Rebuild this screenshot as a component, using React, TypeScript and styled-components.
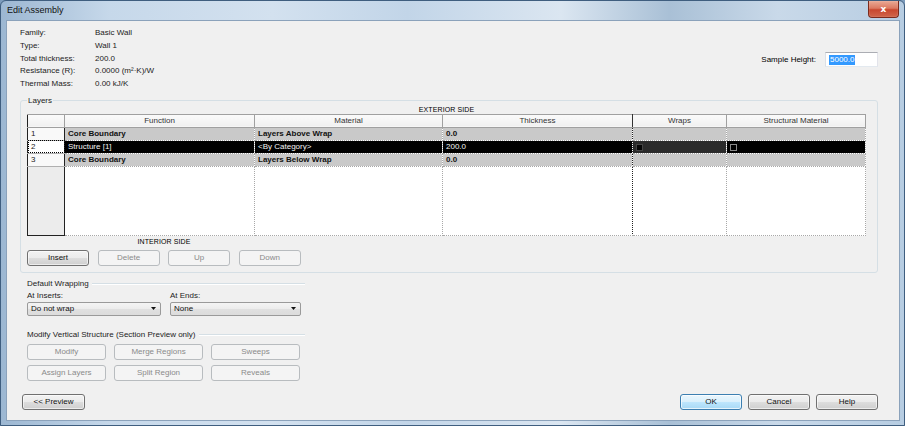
import React from "react";
import styled, { createGlobalStyle, css } from "styled-components";

const GlobalStyle = createGlobalStyle`
  html, body { margin: 0; padding: 0; }
  body {
    width: 905px; height: 426px; overflow: hidden;
    font-family: "Liberation Sans", Arial, sans-serif;
    font-size: 8px; color: #000; background: #7d9cbc;
  }
  #root { width: 905px; height: 426px; }
  * { box-sizing: border-box; }
`;

const Window = styled.div`
  width: 905px;
  height: 426px;
  display: flex;
  flex-direction: column;
  border: 1px solid #3f5e7f;
  border-radius: 6px 6px 0 0;
  background: linear-gradient(90deg, #9cb7d2 0%, #c6d8ea 12%, #d3e1ef 30%, #c2d5e8 45%, #dbe6f1 62%, #a9c0d6 74%, #c9d9e9 86%, #b7cde2 100%);
`;

const TitleBar = styled.div`
  height: 19px;
  display: flex;
  align-items: flex-start;
  justify-content: space-between;
  padding-left: 6px;
  padding-right: 5px;
`;

const TitleText = styled.span`
  font-size: 9px;
  line-height: 19px;
  color: #111;
`;

const CloseButton = styled.div`
  width: 31px;
  height: 17px;
  border: 1px solid #7b2a1c;
  border-top: none;
  border-radius: 0 0 4px 4px;
  background: linear-gradient(180deg, #e9a995 0%, #dc7a62 45%, #c8472e 55%, #d0654a 100%);
  color: #fff;
  font-family: "DejaVu Sans", sans-serif;
  font-weight: bold;
  font-size: 9px;
  display: flex;
  align-items: center;
  justify-content: center;
  box-shadow: inset 0 0 1px rgba(255, 255, 255, 0.7);
`;

const Middle = styled.div`
  flex: 1;
  display: flex;
  padding: 0 5px;
`;

const Content = styled.div`
  flex: 1;
  display: flex;
  flex-direction: column;
  background: #f0f0f0;
  border: 1px solid #8ba2bb;
  padding: 6px 21px 0 13px;
`;

const BottomFrame = styled.div`
  height: 4px;
`;

const TopSection = styled.div`
  display: flex;
  justify-content: space-between;
  align-items: flex-start;
`;

const InfoGrid = styled.div`
  display: grid;
  grid-template-columns: 75px auto;
  line-height: 12.8px;
  color: #222;
`;

const SampleRow = styled.div`
  display: flex;
  align-items: center;
  gap: 9px;
  margin-top: 25px;
`;

const TextInput = styled.div`
  width: 53px;
  height: 15px;
  background: #fff;
  border: 1px solid #abadb3;
  border-color: #abadb3 #e2e3ea #e3e9ef #dbdfe6;
  display: flex;
  align-items: center;
  padding-left: 3px;
`;

const Selected = styled.span`
  background: #3399ff;
  color: #fff;
  line-height: 10px;
  padding: 0 1px;
`;

const Group = styled.fieldset`
  margin: 5px 0 0 0;
  padding: 0 11px 6px 6px;
  border: 1px solid #d5dfe5;
  border-radius: 3px;
  min-inline-size: auto;
`;

const Legend = styled.legend`
  padding: 0 1px;
  line-height: 10px;
  color: #222;
`;

const SideLabel = styled.div`
  text-align: center;
  line-height: 8px;
  font-size: 7px;
  letter-spacing: 0.1px;
`;

const GridTable = styled.table`
  width: 838px;
  table-layout: fixed;
  border-collapse: collapse;
  background: #fff;
`;

const HeadCell = styled.th<{ $dark?: boolean; $first?: boolean }>`
  height: 13px;
  padding: 0;
  font-weight: normal;
  text-align: center;
  background: linear-gradient(180deg, #fbfbfb, #f0f0f0);
  border-top: 1px solid #a0a0a0;
  border-bottom: 1px solid #a0a0a0;
  border-right: 1px solid ${(p) => (p.$dark ? "#333" : "#a0a0a0")};
  ${(p) => p.$first && "border-left: 1px solid #222;"}
  color: #333;
`;

const RowHead = styled.th<{ $empty?: boolean; $focus?: boolean }>`
  padding: 0 0 0 3px;
  height: 13px;
  font-weight: normal;
  text-align: left;
  color: #222;
  background: ${(p) => (p.$empty ? "#ececec" : "#f9f9f9")};
  border-left: 1px solid #222;
  border-right: 1px solid #222;
  border-bottom: 1px solid ${(p) => (p.$empty ? "#222" : "#b0b0b0")};
  ${(p) =>
    p.$focus &&
    css`
      outline: 1px dotted #000;
      outline-offset: -1px;
      background: #fff;
    `}
`;

type Tone = "core" | "sel" | "sel2" | "plain";

const toneStyles: Record<Tone, ReturnType<typeof css>> = {
  core: css`
    background: #c9c9c9;
    font-weight: bold;
    color: #111;
  `,
  sel: css`
    background: #000;
    color: #f4f4f4;
  `,
  sel2: css`
    background: #2b2b2b;
    color: #fff;
  `,
  plain: css`
    background: #fff;
  `,
};

const Cell = styled.td<{ $tone: Tone; $dark?: boolean; $h?: number }>`
  height: ${(p) => p.$h ?? 13}px;
  padding: 0 0 0 3px;
  white-space: nowrap;
  overflow: hidden;
  vertical-align: middle;
  border-right: 1px dotted ${(p) => (p.$dark ? "#222" : "#a8a8a8")};
  border-bottom: 1px dotted #a8a8a8;
  ${(p) => toneStyles[p.$tone]}
`;

const Check = styled.span<{ $filled?: boolean }>`
  display: inline-block;
  width: 7px;
  height: 7px;
  vertical-align: middle;
  border: 1px solid ${(p) => (p.$filled ? "#444" : "#8a8a8a")};
  background: ${(p) => (p.$filled ? "#050505" : "#000")};
`;

const ButtonBlock = styled.div`
  width: 274px;
  display: flex;
  flex-direction: column;
`;

const InteriorLabel = styled(SideLabel)`
  margin-top: 2px;
`;

const ButtonRow = styled.div<{ $cols: string; $gap?: number }>`
  display: grid;
  grid-template-columns: ${(p) => p.$cols};
  column-gap: ${(p) => p.$gap ?? 8}px;
  margin-top: 4px;
`;

const Button = styled.div<{ $disabled?: boolean; $default?: boolean; $w?: number }>`
  height: 16px;
  ${(p) => (p.$w ? `width: ${p.$w}px;` : "")}
  display: flex;
  align-items: center;
  justify-content: center;
  border-radius: 3px;
  border: 1px solid #707070;
  background: linear-gradient(180deg, #f2f2f2 0%, #ebebeb 50%, #dddddd 51%, #cfcfcf 100%);
  box-shadow: inset 0 0 0 1px rgba(255, 255, 255, 0.6);
  color: #111;
  ${(p) =>
    p.$disabled &&
    css`
      border-color: #b8bcbf;
      background: #f4f4f4;
      color: #8a8a8a;
      box-shadow: none;
    `}
  ${(p) =>
    p.$default &&
    css`
      border-color: #3c7fb1;
      background: linear-gradient(180deg, #eaf6fd 0%, #d9f0fc 50%, #bee6fd 51%, #a7d9f5 100%);
      box-shadow: inset 0 0 0 1px rgba(255, 255, 255, 0.7);
    `}
`;

const Section = styled.div<{ $mt: number }>`
  width: 278px;
  margin-left: 7px;
  margin-top: ${(p) => p.$mt}px;
  display: flex;
  flex-direction: column;
`;

const SectionTitle = styled.div`
  display: flex;
  align-items: center;
  gap: 3px;
  line-height: 10px;
  color: #222;
  &::after {
    content: "";
    flex: 1;
    height: 1px;
    background: #d5dfe5;
    border-bottom: 1px solid #fff;
  }
`;

const FieldGrid = styled.div`
  display: grid;
  grid-template-columns: 134px 131px;
  column-gap: 9px;
  margin-top: 2px;
`;

const FieldLabel = styled.div`
  line-height: 10px;
  color: #222;
`;

const Dropdown = styled.div`
  margin-top: 1px;
  height: 14px;
  display: flex;
  align-items: center;
  justify-content: space-between;
  padding: 0 4px 0 3px;
  border: 1px solid #9a9a9a;
  border-radius: 2px;
  background: linear-gradient(180deg, #f4f4f4 0%, #ececec 50%, #e0e0e0 51%, #dcdcdc 100%);
  color: #111;
`;

const Footer = styled.div`
  margin-top: 13px;
  display: flex;
  justify-content: space-between;
  padding-left: 2px;
`;

const FooterRight = styled.div`
  display: flex;
  gap: 6px;
`;

const Arrow = () => (
  <svg width="5" height="3" viewBox="0 0 5 3">
    <path d="M0 0 H5 L2.5 3 Z" fill="#111" />
  </svg>
);

const rows = [
  { n: "1", fn: "Core Boundary", mat: "Layers Above Wrap", th: "0.0", tone: "core" as Tone },
  { n: "2", fn: "Structure [1]", mat: "<By Category>", th: "200.0", tone: "sel" as Tone },
  { n: "3", fn: "Core Boundary", mat: "Layers Below Wrap", th: "0.0", tone: "core" as Tone },
];

const info = [
  ["Family:", "Basic Wall"],
  ["Type:", "Wall 1"],
  ["Total thickness:", "200.0"],
  ["Resistance (R):", "0.0000 (m²·K)/W"],
  ["Thermal Mass:", "0.00 kJ/K"],
];

const colWidths = [37, 190, 188, 190, 94, 139];

export default function App() {
  return (
    <>
      <GlobalStyle />
      <Window>
        <TitleBar>
          <TitleText>Edit Assembly</TitleText>
          <CloseButton>x</CloseButton>
        </TitleBar>
        <Middle>
          <Content>
            <TopSection>
              <InfoGrid>
                {info.map(([k, v]) => (
                  <React.Fragment key={k}>
                    <span>{k}</span>
                    <span>{v}</span>
                  </React.Fragment>
                ))}
              </InfoGrid>
              <SampleRow>
                <span>Sample Height:</span>
                <TextInput>
                  <Selected>5000.0</Selected>
                </TextInput>
              </SampleRow>
            </TopSection>

            <Group>
              <Legend>Layers</Legend>
              <SideLabel>EXTERIOR SIDE</SideLabel>
              <GridTable>
                <colgroup>
                  {colWidths.map((w, i) => (
                    <col key={i} width={w} />
                  ))}
                </colgroup>
                <thead>
                  <tr>
                    <HeadCell $first />
                    <HeadCell>Function</HeadCell>
                    <HeadCell>Material</HeadCell>
                    <HeadCell $dark>Thickness</HeadCell>
                    <HeadCell>Wraps</HeadCell>
                    <HeadCell>Structural Material</HeadCell>
                  </tr>
                </thead>
                <tbody>
                  {rows.map((r) => {
                    const sel = r.tone === "sel";
                    const h = sel ? 12 : 13;
                    return (
                      <tr key={r.n}>
                        <RowHead $focus={sel}>{r.n}</RowHead>
                        <Cell $tone={r.tone} $h={h}>{r.fn}</Cell>
                        <Cell $tone={r.tone} $h={h}>{r.mat}</Cell>
                        <Cell $tone={r.tone} $h={h} $dark>{r.th}</Cell>
                        <Cell $tone={sel ? "sel2" : r.tone} $h={h}>
                          {sel && <Check $filled />}
                        </Cell>
                        <Cell $tone={r.tone} $h={h}>
                          {sel && <Check />}
                        </Cell>
                      </tr>
                    );
                  })}
                  <tr>
                    <RowHead $empty />
                    <Cell $tone="plain" $h={69} />
                    <Cell $tone="plain" $h={69} />
                    <Cell $tone="plain" $h={69} $dark />
                    <Cell $tone="plain" $h={69} />
                    <Cell $tone="plain" $h={69} />
                  </tr>
                </tbody>
              </GridTable>
              <ButtonBlock>
                <InteriorLabel>INTERIOR SIDE</InteriorLabel>
                <ButtonRow $cols="62px 62px 62px 62px" $gap={8.6}>
                  <Button>Insert</Button>
                  <Button $disabled>Delete</Button>
                  <Button $disabled>Up</Button>
                  <Button $disabled>Down</Button>
                </ButtonRow>
              </ButtonBlock>
            </Group>

            <Section $mt={6}>
              <SectionTitle>Default Wrapping</SectionTitle>
              <FieldGrid>
                <FieldLabel>At Inserts:</FieldLabel>
                <FieldLabel>At Ends:</FieldLabel>
                <Dropdown>
                  <span>Do not wrap</span>
                  <Arrow />
                </Dropdown>
                <Dropdown>
                  <span>None</span>
                  <Arrow />
                </Dropdown>
              </FieldGrid>
            </Section>

            <Section $mt={14}>
              <SectionTitle>Modify Vertical Structure (Section Preview only)</SectionTitle>
              <ButtonRow $cols="79px 89px 89px" $gap={8}>
                <Button $disabled>Modify</Button>
                <Button $disabled>Merge Regions</Button>
                <Button $disabled>Sweeps</Button>
              </ButtonRow>
              <ButtonRow $cols="79px 89px 89px" $gap={8} style={{ marginTop: 5 }}>
                <Button $disabled>Assign Layers</Button>
                <Button $disabled>Split Region</Button>
                <Button $disabled>Reveals</Button>
              </ButtonRow>
            </Section>

            <Footer>
              <Button $w={63}>&lt;&lt; Preview</Button>
              <FooterRight>
                <Button $w={62} $default>OK</Button>
                <Button $w={62}>Cancel</Button>
                <Button $w={62}>Help</Button>
              </FooterRight>
            </Footer>
          </Content>
        </Middle>
        <BottomFrame />
      </Window>
    </>
  );
}
